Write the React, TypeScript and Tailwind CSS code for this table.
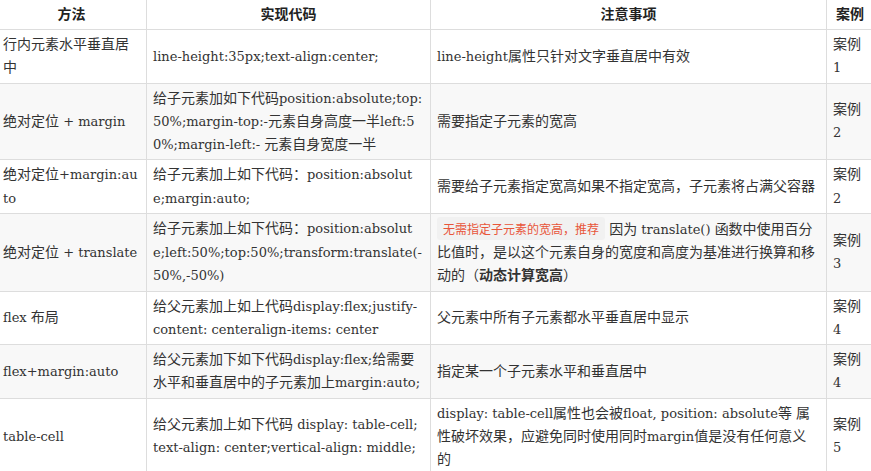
import React, { Fragment } from 'react';

// CJK runs are a touch larger than the Latin serif runs
const CJK = /([\u3000-\u303f\u4e00-\u9fff\uff00-\uffef]+)/;

function Mixed({ text }: { text: string }) {
  return (
    <>
      {text.split(CJK).map((part, i) =>
        i % 2 === 1 ? <span key={i} className="text-[14px]">{part}</span> : part
      )}
    </>
  );
}

function Lines({ lines }: { lines: string[] }) {
  return (
    <>
      {lines.map((l, i) => (
        <Fragment key={i}>
          {i > 0 && <br />}
          <Mixed text={l} />
        </Fragment>
      ))}
    </>
  );
}

type Row = {
  method: string[];
  code: string[];
  note: React.ReactNode;
  demo: string[];
};

const rows: Row[] = [
  {
    method: ['行内元素水平垂直居', '中'],
    code: ['line-height:35px;text-align:center;'],
    note: <Lines lines={['line-height属性只针对文字垂直居中有效']} />,
    demo: ['案例', '1'],
  },
  {
    method: ['绝对定位 + margin'],
    code: ['给子元素加如下代码position:absolute;top:', '50%;margin-top:-元素自身高度一半left:5', '0%;margin-left:- 元素自身宽度一半'],
    note: <Lines lines={['需要指定子元素的宽高']} />,
    demo: ['案例', '2'],
  },
  {
    method: ['绝对定位+margin:au', 'to'],
    code: ['给子元素加上如下代码：position:absolut', 'e;margin:auto;'],
    note: <Lines lines={['需要给子元素指定宽高如果不指定宽高，子元素将占满父容器']} />,
    demo: ['案例', '2'],
  },
  {
    method: ['绝对定位 + translate'],
    code: ['给子元素加上如下代码：position:absolut', 'e;left:50%;top:50%;transform:translate(-', '50%,-50%)'],
    note: (
      <>
        <span className="rounded-[3px] bg-[#f1f1f1] px-[6px] py-[3px] font-['Noto_Sans_CJK_SC',sans-serif] text-[12px] text-[#e8553a]">
          无需指定子元素的宽高，推荐
        </span>{' '}
        <Mixed text="因为 translate() 函数中使用百分" />
        <br />
        <Mixed text="比值时，是以这个元素自身的宽度和高度为基准进行换算和移" />
        <br />
        <Mixed text="动的（" />
        <strong className="font-bold">
          <Mixed text="动态计算宽高" />
        </strong>
        <Mixed text="）" />
      </>
    ),
    demo: ['案例', '3'],
  },
  {
    method: ['flex 布局'],
    code: ['给父元素加上如上代码display:flex;justify-', 'content: centeralign-items: center'],
    note: <Lines lines={['父元素中所有子元素都水平垂直居中显示']} />,
    demo: ['案例', '4'],
  },
  {
    method: ['flex+margin:auto'],
    code: ['给父元素加下如下代码display:flex;给需要', '水平和垂直居中的子元素加上margin:auto;'],
    note: <Lines lines={['指定某一个子元素水平和垂直居中']} />,
    demo: ['案例', '4'],
  },
  {
    method: ['table-cell'],
    code: ['给父元素加上如下代码 display: table-cell;', 'text-align: center;vertical-align: middle;'],
    note: (
      <Lines
        lines={[
          'display: table-cell属性也会被float, position: absolute等 属',
          '性破坏效果，应避免同时使用同时margin值是没有任何意义',
          '的',
        ]}
      />
    ),
    demo: ['案例', '5'],
  },
];

const td = 'border border-[#dddddd] px-[6px] py-[3px] align-middle whitespace-nowrap';
const th = 'border border-t-0 border-[#dddddd] px-[6px] py-[2px] text-center font-bold text-[#222] leading-[24px] whitespace-nowrap';

export default function App() {
  return (
    <div className="h-[471px] w-[871px] overflow-hidden bg-white">
      <table className="-ml-[4px] w-[877px] table-fixed border-collapse font-['DejaVu_Serif','Noto_Sans_CJK_SC',serif] text-[13px] leading-[23.25px] text-[#333]">
        <colgroup>
          <col className="w-[150px]" />
          <col className="w-[284px]" />
          <col className="w-[396px]" />
          <col className="w-[47px]" />
        </colgroup>
        <thead>
          <tr className="bg-white">
            <th className={th}><Mixed text="方法" /></th>
            <th className={th}><Mixed text="实现代码" /></th>
            <th className={th}><Mixed text="注意事项" /></th>
            <th className={th}><Mixed text="案例" /></th>
          </tr>
        </thead>
        <tbody>
          {rows.map((r, i) => (
            <tr key={i} className={i % 2 === 1 ? 'bg-[#f8f8f8]' : 'bg-white'}>
              <td className={td}><Lines lines={r.method} /></td>
              <td className={td}><Lines lines={r.code} /></td>
              <td className={td}>{r.note}</td>
              <td className={td}><Lines lines={r.demo} /></td>
            </tr>
          ))}
        </tbody>
      </table>
    </div>
  );
}
